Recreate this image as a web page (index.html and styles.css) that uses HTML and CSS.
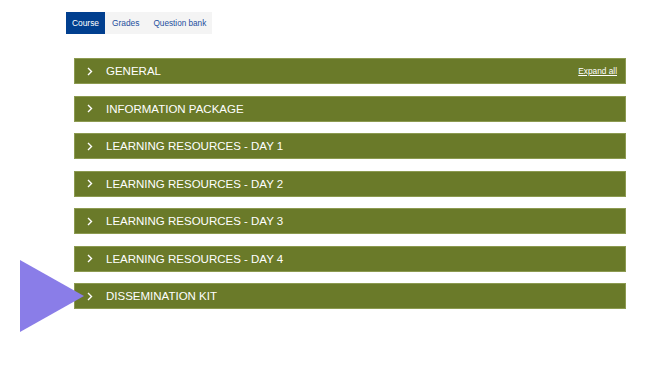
FILE: index.html
```html
<!DOCTYPE html>
<html lang="en">
<head>
<meta charset="UTF-8">
<meta name="viewport" content="width=device-width,initial-scale=1.0">
<title>Course</title>
<link rel="stylesheet" href="styles.css">
</head>
<body>
<nav class="tabs">
<a href="#" class="tab active">Course</a>
<a href="#" class="tab">Grades</a>
<a href="#" class="tab">Question bank</a>
</nav>
<main class="sections">
<div class="section">
<svg class="chev" viewBox="0 0 6 9"><path d="M1 1l3.5 3.5L1 8" fill="none" stroke="#fff" stroke-width="1.4"/></svg>
<h3>GENERAL</h3>
<a href="#" class="expand">Expand all</a>
</div>
<div class="section">
<svg class="chev" viewBox="0 0 6 9"><path d="M1 1l3.5 3.5L1 8" fill="none" stroke="#fff" stroke-width="1.4"/></svg>
<h3>INFORMATION PACKAGE</h3>
</div>
<div class="section">
<svg class="chev" viewBox="0 0 6 9"><path d="M1 1l3.5 3.5L1 8" fill="none" stroke="#fff" stroke-width="1.4"/></svg>
<h3>LEARNING RESOURCES - DAY 1</h3>
</div>
<div class="section">
<svg class="chev" viewBox="0 0 6 9"><path d="M1 1l3.5 3.5L1 8" fill="none" stroke="#fff" stroke-width="1.4"/></svg>
<h3>LEARNING RESOURCES - DAY 2</h3>
</div>
<div class="section">
<svg class="chev" viewBox="0 0 6 9"><path d="M1 1l3.5 3.5L1 8" fill="none" stroke="#fff" stroke-width="1.4"/></svg>
<h3>LEARNING RESOURCES - DAY 3</h3>
</div>
<div class="section">
<svg class="chev" viewBox="0 0 6 9"><path d="M1 1l3.5 3.5L1 8" fill="none" stroke="#fff" stroke-width="1.4"/></svg>
<h3>LEARNING RESOURCES - DAY 4</h3>
</div>
<div class="section">
<svg class="chev" viewBox="0 0 6 9"><path d="M1 1l3.5 3.5L1 8" fill="none" stroke="#fff" stroke-width="1.4"/></svg>
<h3>DISSEMINATION KIT</h3>
</div>
</main>
<svg class="pointer" viewBox="0 0 64 72"><polygon points="0,0 64,36 0,72" fill="#8a7de8"/></svg>
</body>
</html>
```

FILE: styles.css
```css
*,*::before,*::after{margin:0;padding:0;box-sizing:border-box}
body{font-family:"Liberation Sans",Arial,sans-serif;background:#fff;color:#222;width:650px;height:368px;position:relative;overflow:hidden}
.tabs{display:flex;margin:12px 0 0 66px;width:146px;height:22px;background:#f4f4f4}
.tab{display:flex;align-items:center;flex-shrink:0;white-space:nowrap;height:22px;padding:0 7px;font-size:8.4px;color:#1d4f9e;text-decoration:none}
.tab:last-child{font-size:8.2px}
.tab.active{background:#013f8f;color:#fff;padding:0 6px;width:39px}
.sections{display:flex;flex-direction:column;gap:11.5px;margin:24px 0 0 74px;width:552px}
.section{display:flex;align-items:center;height:26px;padding:0 8px 0 12px;background:#6a7a29;border:1px solid #8c9a50;color:#fff}
.chev{width:6px;height:9px;margin-right:13px;flex-shrink:0}
.section h3{font-size:11.5px;font-weight:400;flex-grow:1}
.expand{font-size:8.3px;color:#fff;text-decoration:underline}
.pointer{position:absolute;left:20px;top:260px;width:64px;height:72px}
```
